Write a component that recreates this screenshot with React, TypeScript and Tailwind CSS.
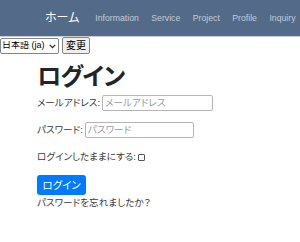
import React from "react";

export default function App() {
  const jp = { fontFamily: "'Liberation Sans', 'Noto Sans CJK JP', sans-serif", fontFeatureSettings: "'palt'" } as React.CSSProperties;
  return (
    <div className="w-[300px] h-[242px] bg-white overflow-hidden text-[#212529]" style={jp}>
      <nav className="h-[37px] bg-[#536a89] border-b border-[#c9ced6] flex items-center pl-[45px] whitespace-nowrap">
        <span className="text-white text-[12px] mr-[16px] leading-none shrink-0">ホーム</span>
        <div className="flex gap-[12.5px] text-[8.7px] text-[#c3cad6] leading-none shrink-0" style={{ fontFamily: "'Liberation Sans', sans-serif" }}>
          <span>Information</span>
          <span>Service</span>
          <span>Project</span>
          <span>Profile</span>
          <span>Inquiry</span>
        </div>
      </nav>
      <div className="flex items-center gap-[3px] h-[17px]">
        <div className="relative h-[16px] w-[59px] shrink-0">
          <select className="block appearance-none h-[16px] w-[59px] text-[9px] border border-[#858585] rounded-[2px] bg-white text-black pl-[1px] leading-none" style={jp}>
            <option>日本語 (ja)</option>
          </select>
          <svg className="absolute right-[3px] top-[6px] pointer-events-none" width="7" height="5" viewBox="0 0 7 5">
            <path d="M0.8 0.8 L3.5 3.6 L6.2 0.8" fill="none" stroke="#222" strokeWidth="1.2" />
          </svg>
        </div>
        <button className="block h-[17px] px-[3px] text-[10px] border border-[#858585] rounded-[2px] bg-[#efefef] text-black leading-none">変更</button>
      </div>
      <div className="pl-[37px] pt-[9px]">
        <h1 className="text-[24px] font-bold leading-[28px] text-[#212529] tracking-[-0.8px]">ログイン</h1>
        <div className="flex items-center mt-[4px] text-[9.6px] text-[#3a3a3a] leading-[16px]">
          <span>メールアドレス:</span>
          <input className="ml-[2px] w-[111px] h-[16px] border border-[#b5b5b5] rounded-[2px] px-[2px] text-[9.6px] placeholder:text-[#9a9a9a]" placeholder="メールアドレス" style={jp} />
        </div>
        <div className="flex items-center mt-[11px] text-[9.6px] text-[#3a3a3a] leading-[16px]">
          <span>パスワード:</span>
          <input className="ml-[2px] w-[109px] h-[16px] border border-[#b5b5b5] rounded-[2px] px-[2px] text-[9.6px] placeholder:text-[#9a9a9a]" placeholder="パスワード" style={jp} />
        </div>
        <div className="flex items-center mt-[11px] text-[9.6px] text-[#3a3a3a] leading-[16px]">
          <span>ログインしたままにする:</span>
          <span className="ml-[2px] w-[7px] h-[7px] border border-[#555] rounded-[1px] inline-block" />
        </div>
        <button className="mt-[10px] h-[20px] w-[49px] bg-[#007bff] text-white text-[10.5px] rounded-[3px] leading-none">ログイン</button>
        <div className="text-[9.6px] text-[#3a3a3a] leading-[13px]">パスワードを忘れましたか？</div>
      </div>
    </div>
  );
}
